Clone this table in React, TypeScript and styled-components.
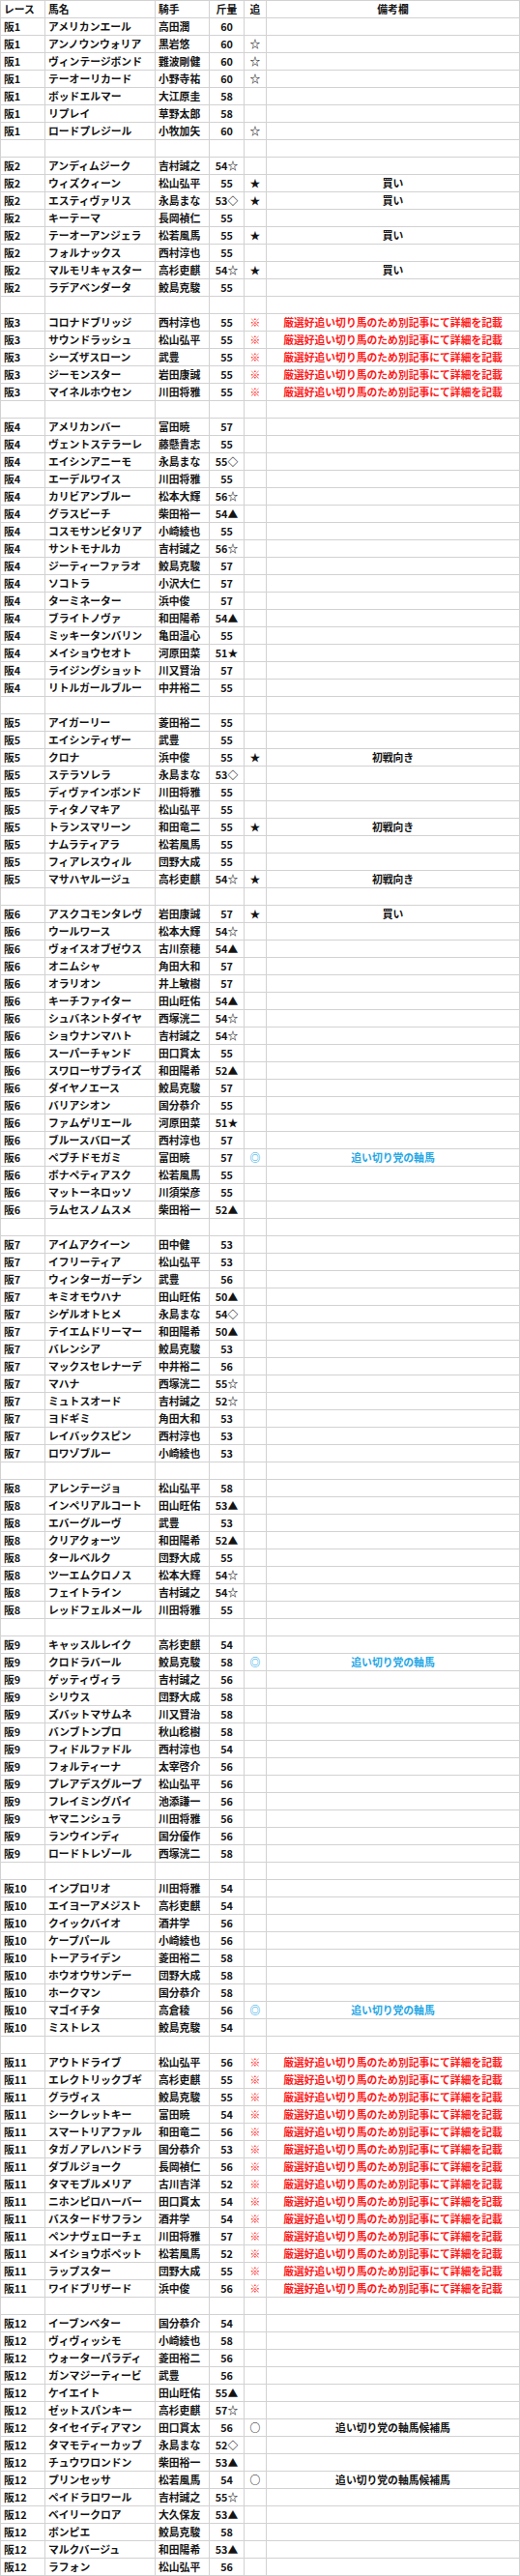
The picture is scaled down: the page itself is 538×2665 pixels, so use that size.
import { Fragment } from "react";
import styled, { createGlobalStyle } from "styled-components";

const GlobalStyle = createGlobalStyle`
  body {
    margin: 0;
    background: #fff;
  }
`;

type Tone = "red" | "blue" | "plain";

const toneColor: Record<Tone, string> = {
  red: "#ff1a1a",
  blue: "#25a7e6",
  plain: "#141414",
};

const Table = styled.table`
  width: 538px;
  border-collapse: collapse;
  table-layout: fixed;
  font-family: "Noto Sans CJK JP", "Noto Sans", sans-serif;
  font-size: 10.8px;
  font-weight: 700;
  color: #141414;
`;

const Cell = styled.td<{ $center?: boolean; $tone?: Tone }>`
  border: 1px solid #d2d2d2;
  height: 17px;
  padding: ${(p) => (p.$center ? "0" : "0 0 0 3px")};
  line-height: 17px;
  white-space: nowrap;
  overflow: hidden;
  text-align: ${(p) => (p.$center ? "center" : "left")};
  color: ${(p) => toneColor[p.$tone ?? "plain"]};
`;

const HeadCell = styled(Cell).attrs({ as: "th" })``;

const NOTE_RED = "厳選好追い切り馬のため別記事にて詳細を記載";

const races: string[][] = [
  [
    "アメリカンエール|高田潤|60",
    "アンノウンウォリア|黒岩悠|60|☆",
    "ヴィンテージボンド|難波剛健|60|☆",
    "テーオーリカード|小野寺祐|60|☆",
    "ボッドエルマー|大江原圭|58",
    "リプレイ|草野太郎|58",
    "ロードプレジール|小牧加矢|60|☆",
  ],
  [
    "アンディムジーク|吉村誠之|54☆",
    "ウィズクィーン|松山弘平|55|★|買い",
    "エスティヴァリス|永島まな|53◇|★|買い",
    "キーテーマ|長岡禎仁|55",
    "テーオーアンジェラ|松若風馬|55|★|買い",
    "フォルナックス|西村淳也|55",
    "マルモリキャスター|高杉吏麒|54☆|★|買い",
    "ラデアベンダータ|鮫島克駿|55",
  ],
  [
    `コロナドブリッジ|西村淳也|55|※|${NOTE_RED}`,
    `サウンドラッシュ|松山弘平|55|※|${NOTE_RED}`,
    `シーズザスローン|武豊|55|※|${NOTE_RED}`,
    `ジーモンスター|岩田康誠|55|※|${NOTE_RED}`,
    `マイネルホウセン|川田将雅|55|※|${NOTE_RED}`,
  ],
  [
    "アメリカンバー|富田暁|57",
    "ヴェントステラーレ|藤懸貴志|55",
    "エイシンアニーモ|永島まな|55◇",
    "エーデルワイス|川田将雅|55",
    "カリビアンブルー|松本大輝|56☆",
    "グラスビーチ|柴田裕一|54▲",
    "コスモサンビタリア|小崎綾也|55",
    "サントモナルカ|吉村誠之|56☆",
    "ジーティーファラオ|鮫島克駿|57",
    "ソコトラ|小沢大仁|57",
    "ターミネーター|浜中俊|57",
    "ブライトノヴァ|和田陽希|54▲",
    "ミッキータンバリン|亀田温心|55",
    "メイショウセオト|河原田菜|51★",
    "ライジングショット|川又賢治|57",
    "リトルガールブルー|中井裕二|55",
  ],
  [
    "アイガーリー|菱田裕二|55",
    "エイシンティザー|武豊|55",
    "クロナ|浜中俊|55|★|初戦向き",
    "ステラソレラ|永島まな|53◇",
    "ディヴァインボンド|川田将雅|55",
    "ティタノマキア|松山弘平|55",
    "トランスマリーン|和田竜二|55|★|初戦向き",
    "ナムラティアラ|松若風馬|55",
    "フィアレスウィル|団野大成|55",
    "マサハヤルージュ|高杉吏麒|54☆|★|初戦向き",
  ],
  [
    "アスクコモンタレヴ|岩田康誠|57|★|買い",
    "ウールワース|松本大輝|54☆",
    "ヴォイスオブゼウス|古川奈穂|54▲",
    "オニムシャ|角田大和|57",
    "オラリオン|井上敏樹|57",
    "キーチファイター|田山旺佑|54▲",
    "シュバネントダイヤ|西塚洸二|54☆",
    "ショウナンマハト|吉村誠之|54☆",
    "スーパーチャンド|田口貫太|55",
    "スワローサプライズ|和田陽希|52▲",
    "ダイヤノエース|鮫島克駿|57",
    "バリアシオン|国分恭介|55",
    "ファムゲリエール|河原田菜|51★",
    "ブルースバローズ|西村淳也|57",
    "ペプチドモガミ|富田暁|57|◎|追い切り党の軸馬",
    "ボナペティアスク|松若風馬|55",
    "マットーネロッソ|川須栄彦|55",
    "ラムセスノムスメ|柴田裕一|52▲",
  ],
  [
    "アイムアクイーン|田中健|53",
    "イフリーティア|松山弘平|53",
    "ウィンターガーデン|武豊|56",
    "キミオモウハナ|田山旺佑|50▲",
    "シゲルオトヒメ|永島まな|54◇",
    "テイエムドリーマー|和田陽希|50▲",
    "バレンシア|鮫島克駿|53",
    "マックスセレナーデ|中井裕二|56",
    "マハナ|西塚洸二|55☆",
    "ミュトスオード|吉村誠之|52☆",
    "ヨドギミ|角田大和|53",
    "レイバックスピン|西村淳也|53",
    "ロワゾブルー|小崎綾也|53",
  ],
  [
    "アレンテージョ|松山弘平|58",
    "インペリアルコート|田山旺佑|53▲",
    "エバーグルーヴ|武豊|53",
    "クリアクォーツ|和田陽希|52▲",
    "タールベルク|団野大成|55",
    "ツーエムクロノス|松本大輝|54☆",
    "フェイトライン|吉村誠之|54☆",
    "レッドフェルメール|川田将雅|55",
  ],
  [
    "キャッスルレイク|高杉吏麒|54",
    "クロドラバール|鮫島克駿|58|◎|追い切り党の軸馬",
    "ゲッティヴィラ|吉村誠之|56",
    "シリウス|団野大成|58",
    "ズバットマサムネ|川又賢治|58",
    "バンブトンプロ|秋山稔樹|58",
    "フィドルファドル|西村淳也|54",
    "フォルティーナ|太宰啓介|56",
    "プレアデスグループ|松山弘平|56",
    "フレイミングパイ|池添謙一|56",
    "ヤマニンシュラ|川田将雅|56",
    "ランウインディ|国分優作|56",
    "ロードトレゾール|西塚洸二|58",
  ],
  [
    "インプロリオ|川田将雅|54",
    "エイヨーアメジスト|高杉吏麒|54",
    "クイックバイオ|酒井学|56",
    "ケープパール|小崎綾也|56",
    "トーアライデン|菱田裕二|58",
    "ホウオウサンデー|団野大成|58",
    "ホークマン|国分恭介|58",
    "マゴイチタ|高倉稜|56|◎|追い切り党の軸馬",
    "ミストレス|鮫島克駿|54",
  ],
  [
    `アウトドライブ|松山弘平|56|※|${NOTE_RED}`,
    `エレクトリックブギ|高杉吏麒|55|※|${NOTE_RED}`,
    `グラヴィス|鮫島克駿|55|※|${NOTE_RED}`,
    `シークレットキー|富田暁|54|※|${NOTE_RED}`,
    `スマートリアファル|和田竜二|56|※|${NOTE_RED}`,
    `タガノアレハンドラ|国分恭介|53|※|${NOTE_RED}`,
    `ダブルジョーク|長岡禎仁|56|※|${NOTE_RED}`,
    `タマモブルメリア|古川吉洋|52|※|${NOTE_RED}`,
    `ニホンピロハーバー|田口貫太|54|※|${NOTE_RED}`,
    `バスタードサフラン|酒井学|54|※|${NOTE_RED}`,
    `ペンナヴェローチェ|川田将雅|57|※|${NOTE_RED}`,
    `メイショウポペット|松若風馬|52|※|${NOTE_RED}`,
    `ラップスター|団野大成|55|※|${NOTE_RED}`,
    `ワイドブリザード|浜中俊|56|※|${NOTE_RED}`,
  ],
  [
    "イーブンベター|国分恭介|54",
    "ヴィヴィッシモ|小崎綾也|58",
    "ウォーターパラディ|菱田裕二|56",
    "ガンマジーティービ|武豊|56",
    "ケイエイト|田山旺佑|55▲",
    "ゼットスパンキー|高杉吏麒|57☆",
    "タイセイディアマン|田口貫太|56|○|追い切り党の軸馬候補馬",
    "タマモティーカップ|永島まな|52◇",
    "チュウワロンドン|柴田裕一|53▲",
    "プリンセッサ|松若風馬|54|○|追い切り党の軸馬候補馬",
    "ペイドラロワール|吉村誠之|55☆",
    "ベイリークロア|大久保友|53▲",
    "ボンピエ|鮫島克駿|58",
    "マルクバージュ|和田陽希|53▲",
    "ラフォン|松山弘平|56",
  ],
];

const toneFor = (mark: string): Tone =>
  mark === "※" ? "red" : mark === "◎" ? "blue" : "plain";

const HorseRow = ({ race, line }: { race: string; line: string }) => {
  const [name, jockey, weight, mark = "", note = ""] = line.split("|");
  const tone = toneFor(mark);
  return (
    <tr>
      <Cell>{race}</Cell>
      <Cell>{name}</Cell>
      <Cell>{jockey}</Cell>
      <Cell $center>{weight}</Cell>
      <Cell $center $tone={tone}>
        {mark}
      </Cell>
      <Cell $center $tone={tone}>
        {note}
      </Cell>
    </tr>
  );
};

const BlankRow = () => (
  <tr>
    <Cell />
    <Cell />
    <Cell />
    <Cell />
    <Cell />
    <Cell />
  </tr>
);

export default function App() {
  return (
    <>
      <GlobalStyle />
      <Table>
        <colgroup>
          <col style={{ width: 46 }} />
          <col style={{ width: 114 }} />
          <col style={{ width: 56 }} />
          <col style={{ width: 36 }} />
          <col style={{ width: 23 }} />
          <col />
        </colgroup>
        <thead>
          <tr>
            <HeadCell>レース</HeadCell>
            <HeadCell>馬名</HeadCell>
            <HeadCell>騎手</HeadCell>
            <HeadCell $center>斤量</HeadCell>
            <HeadCell $center>追</HeadCell>
            <HeadCell $center>備考欄</HeadCell>
          </tr>
        </thead>
        <tbody>
          {races.map((horses, i) => (
            <Fragment key={`race-${i}`}>
              {horses.map((line) => (
                <HorseRow key={line} race={`阪${i + 1}`} line={line} />
              ))}
              {i < races.length - 1 && <BlankRow />}
            </Fragment>
          ))}
        </tbody>
      </Table>
    </>
  );
}
